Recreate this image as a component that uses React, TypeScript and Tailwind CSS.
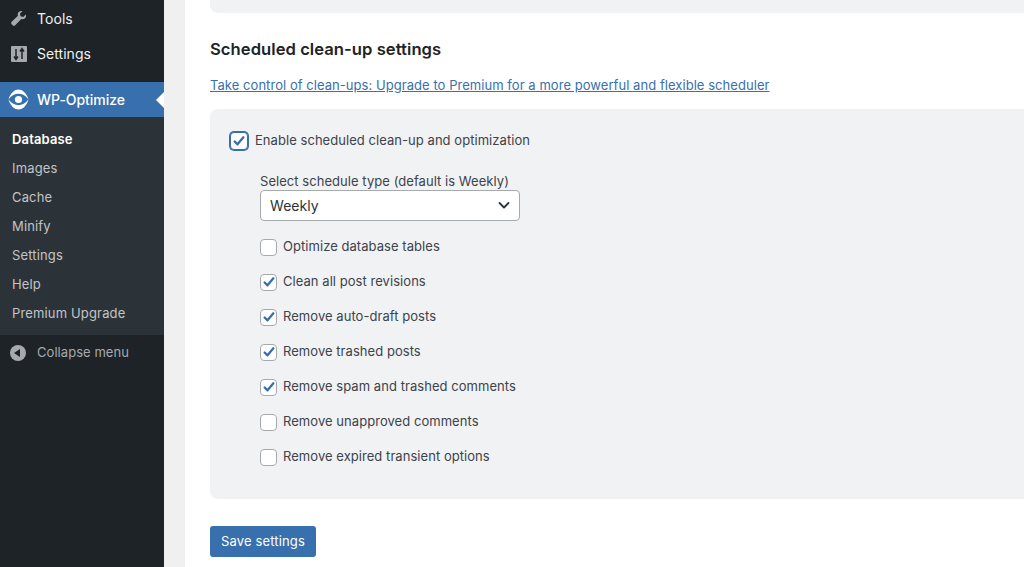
import React from 'react';

const subItems = ['Images', 'Cache', 'Minify', 'Settings', 'Help', 'Premium Upgrade'];

const options = [
  { label: 'Optimize database tables', checked: false },
  { label: 'Clean all post revisions', checked: true },
  { label: 'Remove auto-draft posts', checked: true },
  { label: 'Remove trashed posts', checked: true },
  { label: 'Remove spam and trashed comments', checked: true },
  { label: 'Remove unapproved comments', checked: false },
  { label: 'Remove expired transient options', checked: false },
];

const Check = ({ className }: { className: string }) => (
  <svg className={className} viewBox="0 0 16 16" fill="none" stroke="#3870ad" strokeWidth={2.6} strokeLinecap="round" strokeLinejoin="round">
    <path d="M3 8.500l3.300 3.300L13 3.800" />
  </svg>
);

const Checkbox = ({ checked }: { checked: boolean }) => (
  <span className="flex w-[17px] h-[17px] shrink-0 items-center justify-center rounded-[4px] border border-[#a7aaad] bg-white">
    {checked && <Check className="w-[14px] h-[14px]" />}
  </span>
);

const App: React.FC = () => {
  return (
    <div className="flex h-[567px] w-[1024px] overflow-hidden bg-white font-['Inter',sans-serif] text-[13px] tracking-[0.05px] text-[#3c434a]">
      {/* Sidebar */}
      <aside className="w-[164px] shrink-0 bg-[#1d2327] text-[14px] text-[#f0f0f1]">
        <div className="flex h-[36px] items-center gap-[10px] pl-[10px]">
          <svg className="w-[17px] h-[17px]" viewBox="0 0 20 20" fill="#a7aaad">
            <path d="M18.7 5.3c.5 1.500.2 3.200-1 4.400-1.200 1.200-2.900 1.500-4.400 1L6.100 18c-.8.800-2.100.800-2.900 0l-1.200-1.200c-.8-.800-.8-2.100 0-2.900l7.300-7.200c-.5-1.500-.2-3.200 1-4.400 1.200-1.200 2.900-1.500 4.400-1l-3 3 .8 3 3 .8z" />
          </svg>
          <span>Tools</span>
        </div>
        <div className="flex h-[35px] items-center gap-[10px] pl-[11px]">
          <svg className="w-[16px] h-[16px]" viewBox="0 0 16 16">
            <rect width="16" height="16" rx="1" fill="#a7aaad" />
            <path d="M5 3v10M3 10.500L5 13.500L7 10.500M11 3v10M9 5.500L11 2.500L13 5.500" fill="none" stroke="#1d2327" strokeWidth="1.500" />
          </svg>
          <span>Settings</span>
        </div>
        <div className="h-[11px]" />
        <div className="relative flex h-[35px] items-center gap-[8px] bg-[#3870ad] pl-[8px] text-white">
          <svg className="w-[21px] h-[21px]" viewBox="0 0 21 21" fill="#fff">
            <path d="M0.500 10.500C2.500 3.500 7 0.500 10.500 0.500C14 0.500 18.500 3.500 20.500 10.500C17.500 6.500 14 4.800 10.500 4.800C7 4.800 3.500 6.500 0.500 10.500Z" />
            <path d="M0.500 10.500C2.500 17.500 7 20.500 10.500 20.500C14 20.500 18.500 17.500 20.500 10.500C17.500 14.500 14 16.200 10.500 16.200C7 16.200 3.500 14.500 0.500 10.500Z" />
            <circle cx="10.500" cy="10.500" r="3.600" />
          </svg>
          <span className="font-medium tracking-[-0.05px]">WP-Optimize</span>
          <span className="absolute right-0 top-1/2 -translate-y-1/2 border-y-[8px] border-r-[8px] border-y-transparent border-r-white" />
        </div>
        <div className="bg-[#2c3338] pt-[8px] pb-[7px] text-[13px] tracking-[0.15px] text-[#c3c4c7]">
          <div className="flex h-[29px] items-center pl-[12px] font-semibold text-white">Database</div>
          {subItems.map((item) => (
            <div key={item} className="flex h-[29px] items-center pl-[12px]">{item}</div>
          ))}
        </div>
        <div className="flex h-[35px] items-center gap-[11px] pl-[10px] text-[13px] text-[#a7aaad]">
          <span className="flex w-[16px] h-[16px] items-center justify-center rounded-full bg-[#a7aaad]">
            <span className="mr-[2px] border-y-[4px] border-r-[6px] border-y-transparent border-r-[#1d2327]" />
          </span>
          <span>Collapse menu</span>
        </div>
      </aside>

      {/* Gutter */}
      <div className="w-[21px] shrink-0 bg-[#f0f0f1]" />

      {/* Main */}
      <main className="min-w-0 flex-1 pl-[25px]">
        <div className="h-[13px] rounded-bl-[8px] bg-[#f1f2f4]" />
        <h2 className="mt-[26px] text-[16.600px] leading-[20px] font-semibold text-[#1d2327]">Scheduled clean-up settings</h2>
        <a className="mt-[17px] block leading-[18px] text-[#3870ad] underline">
          Take control of clean-ups: Upgrade to Premium for a more powerful and flexible scheduler
        </a>
        <section className="mt-[15px] h-[390px] rounded-l-[8px] bg-[#f1f2f4] pl-[20px] pt-[22px]">
          <label className="flex items-center gap-[7px]">
            <span className="flex w-[18px] h-[18px] items-center justify-center rounded-[4px] border border-[#3870ad] bg-white shadow-[0_0_0_1px_#3870ad]">
              <Check className="w-[14px] h-[14px]" />
            </span>
            <span>Enable scheduled clean-up and optimization</span>
          </label>
          <div className="ml-[30px] mt-[21px]">
            <div className="leading-[18px]">Select schedule type (default is Weekly)</div>
            <div className="flex h-[31px] w-[260px] items-center justify-between rounded-[4px] border border-[#a7aaad] bg-white pl-[9px] pr-[9px] text-[14px] text-[#2c3338]">
              <span>Weekly</span>
              <svg className="w-[12px] h-[12px]" viewBox="0 0 12 12" fill="none" stroke="#2c3338" strokeWidth="1.800" strokeLinecap="round" strokeLinejoin="round">
                <path d="M1.500 4l4.500 4.500L10.500 4" />
              </svg>
            </div>
            <div className="mt-[9px]">
              {options.map((o) => (
                <label key={o.label} className="flex h-[35px] items-center gap-[6px]">
                  <Checkbox checked={o.checked} />
                  <span>{o.label}</span>
                </label>
              ))}
            </div>
          </div>
        </section>
        <button className="mt-[27px] flex h-[31px] w-[106px] items-center justify-center rounded-[3px] bg-[#3870ad] tracking-[0.15px] text-white">
          Save settings
        </button>
      </main>
    </div>
  );
};

export default App;
